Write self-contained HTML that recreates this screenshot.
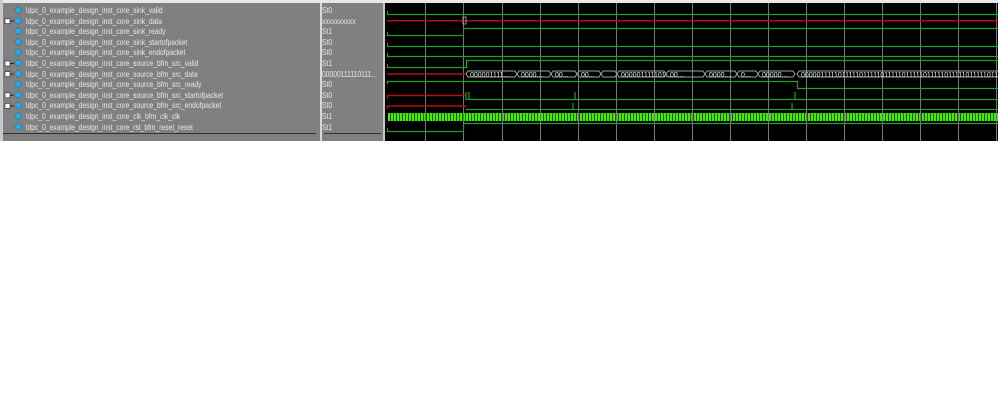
<!DOCTYPE html><html><head><style>
body{margin:0;width:998px;height:406px;background:#fff;position:relative;overflow:hidden;font-family:"Liberation Sans",sans-serif}
.p{position:absolute;top:0;height:141px;background:#808080}
.t{position:absolute;font-size:8.5px;color:#e8e8e8;white-space:nowrap;line-height:10px;transform:scaleX(.79);transform-origin:0 0}
</style></head><body>
<div class="p" style="left:0;width:320px"></div>
<div class="p" style="left:322px;width:61px"></div>
<div style="position:absolute;left:320px;top:0;width:2px;height:141px;background:#d8d8d8"></div>
<div style="position:absolute;left:383px;top:0;width:2px;height:141px;background:#c8c8c8"></div>
<div style="position:absolute;left:0;top:0;width:385px;height:3px;background:#e8e8e8"></div>
<div style="position:absolute;left:0;top:0;width:3px;height:141px;background:#c8c8c8"></div>
<div style="position:absolute;left:3px;top:133px;width:313px;height:1px;background:#333"></div>
<div style="position:absolute;left:324px;top:133px;width:57px;height:1px;background:#333"></div>
<svg style="position:absolute;left:0;top:0" width="385" height="141">
<g fill="#2aa8e0" stroke="#0c5f9a" stroke-width="0.5">
<path d="M18 6l4 4-4 4-4-4z"/><path d="M18 16.6l4 4-4 4-4-4z"/><path d="M18 27.2l4 4-4 4-4-4z"/><path d="M18 37.8l4 4-4 4-4-4z"/><path d="M18 48.4l4 4-4 4-4-4z"/><path d="M18 59l4 4-4 4-4-4z"/><path d="M18 69.6l4 4-4 4-4-4z"/><path d="M18 80.2l4 4-4 4-4-4z"/><path d="M18 90.8l4 4-4 4-4-4z"/><path d="M18 101.4l4 4-4 4-4-4z"/><path d="M18 112l4 4-4 4-4-4z"/><path d="M18 122.6l4 4-4 4-4-4z"/>
</g>
<g fill="#fff" stroke="#222" stroke-width="0.6">
<rect x="5" y="18.6" width="5" height="5"/><rect x="5" y="61" width="5" height="5"/><rect x="5" y="71.6" width="5" height="5"/><rect x="5" y="92.8" width="5" height="5"/><rect x="5" y="103.4" width="5" height="5"/>
</g>
<g stroke="#222"><path d="M10 21h4M10 63.5h4M10 74h4M10 95.3h4M10 105.9h4"/></g>
</svg>
<div class="t" style="left:26px;top:5px">ldpc_0_example_design_inst_core_sink_valid</div>
<div class="t" style="left:26px;top:15.6px">ldpc_0_example_design_inst_core_sink_data</div>
<div class="t" style="left:26px;top:26.2px">ldpc_0_example_design_inst_core_sink_ready</div>
<div class="t" style="left:26px;top:36.8px">ldpc_0_example_design_inst_core_sink_startofpacket</div>
<div class="t" style="left:26px;top:47.4px">ldpc_0_example_design_inst_core_sink_endofpacket</div>
<div class="t" style="left:26px;top:58px">ldpc_0_example_design_inst_core_source_bfm_src_valid</div>
<div class="t" style="left:26px;top:68.6px">ldpc_0_example_design_inst_core_source_bfm_src_data</div>
<div class="t" style="left:26px;top:79.2px">ldpc_0_example_design_inst_core_source_bfm_src_ready</div>
<div class="t" style="left:26px;top:89.8px">ldpc_0_example_design_inst_core_source_bfm_src_startofpacket</div>
<div class="t" style="left:26px;top:100.4px">ldpc_0_example_design_inst_core_source_bfm_src_endofpacket</div>
<div class="t" style="left:26px;top:111px">ldpc_0_example_design_inst_core_clk_bfm_clk_clk</div>
<div class="t" style="left:26px;top:121.6px">ldpc_0_example_design_inst_core_rst_bfm_reset_reset</div>
<div class="t" style="left:322px;top:5px">St0</div>
<div class="t" style="left:322px;top:15.6px">xxxxxxxxxx</div>
<div class="t" style="left:322px;top:26.2px">St1</div>
<div class="t" style="left:322px;top:36.8px">St0</div>
<div class="t" style="left:322px;top:47.4px">St0</div>
<div class="t" style="left:322px;top:58px">St1</div>
<div class="t" style="left:322px;top:68.6px">00000111110111...</div>
<div class="t" style="left:322px;top:79.2px">St0</div>
<div class="t" style="left:322px;top:89.8px">St0</div>
<div class="t" style="left:322px;top:100.4px">St0</div>
<div class="t" style="left:322px;top:111px">St1</div>
<div class="t" style="left:322px;top:121.6px">St1</div>
<div style="position:absolute;left:385px;top:0;width:613px;height:141px;background:#000"></div>
<div style="position:absolute;left:385px;top:0;width:613px;height:3px;background:#e8e8e8"></div>
<div style="position:absolute;left:388px;top:113px;width:610px;height:8px;background:repeating-linear-gradient(90deg,#44ee00 0,#44ee00 2px,#1a5a00 2px,#1a5a00 3px)"></div>
<svg style="position:absolute;left:385px;top:0" width="613" height="141" font-family="Liberation Sans" font-size="7">
<g stroke="#777" stroke-width="1">
<path d="M40.5 3V141M78.5 3V141M117.5 3V141M155.5 3V141M193.5 3V141M231.5 3V141M269.5 3V141M307.5 3V141M345.5 3V141M383.5 3V141M421.5 3V141M459.5 3V141M497.5 3V141M535.5 3V141M573.5 3V141M611.5 3V141"/>
</g>
<g fill="none" stroke="#22a022" stroke-width="1.2">
<path d="M2.5 11V14.5H613"/>
<path d="M2.5 32V35.5H78.5V28.5H613"/>
<path d="M2.5 43V46.5H613"/>
<path d="M2.5 53V56.5H613"/>
<path d="M2.5 64V67.5H81.5V60.5H613"/>
<path d="M2.5 84V81.5H412.5V88.5H613"/>
<path d="M81 99.5H84M84 92V99.5H190M190 92V99.5H410M410 92V99.5H613M81 92V99.5"/>
<path d="M81 109.5H188V103V109.5H407V103V109.5H613"/>
<path d="M2.5 128V131.5H78.5V123.5H613"/>
</g>
<g stroke="#b01010" stroke-width="1.5" fill="none">
<path d="M2 20.7H613"/>
<path d="M2 74H80"/>
<path d="M2.5 99V95.5H81M2.5 109V106H81"/>
</g>
<rect x="78" y="17" width="3" height="7" fill="none" stroke="#aaa" stroke-width="0.8"/>
<g fill="none" stroke="#8fb08f" stroke-width="1">
<path d="M83 71H130L132 74L130 77H83L81 74Z"/>
<path d="M134 71H164L166 74L164 77H134L132 74Z"/>
<path d="M168 71H190L192 74L190 77H168L166 74Z"/>
<path d="M194 71H214L216 74L214 77H194L192 74Z"/>
<path d="M218 71H230L232 74L230 77H218L216 74Z"/>
<path d="M234 71H279L281 74L279 77H234L232 74Z"/>
<path d="M283 71H318L320 74L318 77H283L281 74Z"/>
<path d="M322 71H350L352 74L350 77H322L320 74Z"/>
<path d="M354 71H371L373 74L371 77H354L352 74Z"/>
<path d="M375 71H408L410 74L408 77H375L373 74Z"/>
<path d="M414 71H613M414 77H613M414 71L412 74L414 77"/>
</g>
<g fill="#e8e8e8">
<text x="85" y="77">000001111...</text>
<text x="136" y="77">0000...</text>
<text x="170" y="77">00...</text>
<text x="196" y="77">00...</text>
<text x="236" y="77">000001111101...</text>
<text x="285" y="77">00...</text>
<text x="324" y="77">0000...</text>
<text x="356" y="77">0...</text>
<text x="377" y="77">00000...</text>
<text x="416" y="77">00000111110111110111110111110111110111110111110111110111110</text>
</g>
</svg>
</body></html>
